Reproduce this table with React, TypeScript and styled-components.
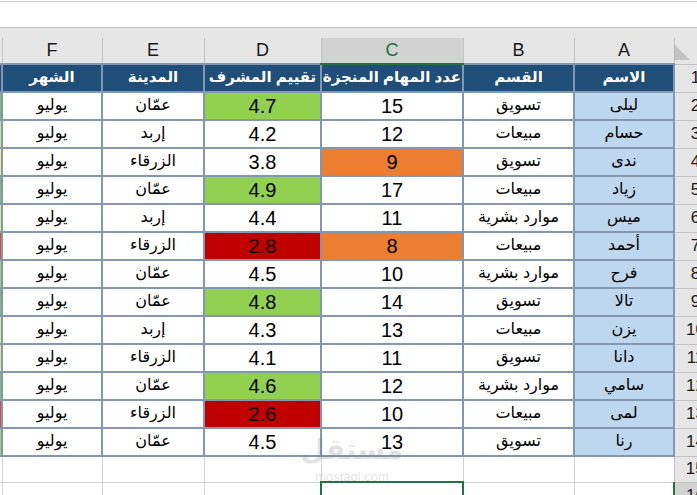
import React from "react";
import styled, { createGlobalStyle } from "styled-components";

const GlobalStyle = createGlobalStyle`
  html, body {
    margin: 0;
    padding: 0;
    background: #ffffff;
    overflow: hidden;
  }
`;

const FONT = `"Liberation Sans", "DejaVu Sans", Arial, sans-serif`;
const SLATE = "#8497b0";
const GRID = "#d4d4d4";
const HEAD_LINE = "#c3c3c3";
const EXCEL_GREEN = "#217346";

const Window = styled.div`
  position: relative;
  width: 697px;
  height: 495px;
  overflow: hidden;
  font-family: ${FONT};
  background: #ffffff;
`;

const FormulaBar = styled.div`
  height: 25px;
  margin-top: 1px;
  border-top: 1px solid #cfcfcf;
  border-bottom: 1px solid #c6c6c6;
  background: #ffffff;
`;

const Spacer = styled.div`
  height: 10px;
  background: #e6e6e6;
`;

const Viewport = styled.div`
  direction: rtl;
  overflow: hidden;
  background: #e6e6e6;
`;

const Sheet = styled.table`
  table-layout: fixed;
  border-collapse: collapse;
  width: 774px;
  margin-right: -19px;
  background: #ffffff;
`;

const ColHeadRow = styled.tr`
  height: 26px;
`;

const ColHead = styled.th<{ $active?: boolean }>`
  padding: 0;
  font-weight: normal;
  font-size: 18px;
  font-family: ${FONT};
  color: ${(p) => (p.$active ? EXCEL_GREEN : "#1a1a1a")};
  background: ${(p) => (p.$active ? "#d2d2d2" : "#e6e6e6")};
  border-left: 1px solid ${HEAD_LINE};
  border-right: 1px solid ${HEAD_LINE};
  border-bottom: ${(p) =>
    p.$active ? `2px solid ${EXCEL_GREEN}` : `1px solid ${HEAD_LINE}`};
  text-align: center;
  vertical-align: middle;
`;

const Corner = styled.th`
  padding: 0;
  background: #e6e6e6;
  border-left: 1px solid ${HEAD_LINE};
  border-bottom: 1px solid ${HEAD_LINE};
  position: relative;
`;

const CornerMark = styled.span`
  position: absolute;
  right: 26px;
  bottom: 4px;
  width: 0;
  height: 0;
  border-left: 16px solid #b4b4b4;
  border-top: 16px solid transparent;
  opacity: 0.7;
`;

const Row = styled.tr<{ $h: number }>`
  height: ${(p) => p.$h}px;
`;

const RowHead = styled.td<{ $active?: boolean }>`
  padding: 0;
  font-size: 17px;
  color: #1a1a1a;
  background: ${(p) => (p.$active ? "#d2d2d2" : "#e6e6e6")};
  border-bottom: 1px solid ${HEAD_LINE};
  border-left: ${(p) =>
    p.$active ? `2px solid ${EXCEL_GREEN}` : `1px solid ${HEAD_LINE}`};
  text-align: center;
  vertical-align: middle;
  font-family: ${FONT};
`;

const HeadCell = styled.td`
  padding: 0 0 2px;
  background: #1f4e78;
  color: #ffffff;
  font-weight: bold;
  font-size: 15px;
  border: 2px solid ${SLATE};
  text-align: center;
  vertical-align: middle;
  white-space: nowrap;
  overflow: hidden;
`;

const Cell = styled.td<{ $fill?: string; $num?: boolean }>`
  padding: 0 2px ${(p) => (p.$num ? "1px" : "3px")};
  background: ${(p) => p.$fill || "#ffffff"};
  color: #000000;
  font-size: ${(p) => (p.$num ? "20px" : "16px")};
  border: 2px solid ${SLATE};
  text-align: center;
  vertical-align: middle;
  white-space: nowrap;
  overflow: hidden;
  line-height: 1;
`;

const EmptyCell = styled.td<{ $selected?: boolean }>`
  padding: 0;
  background: #ffffff;
  border: ${(p) =>
    p.$selected ? `2px solid ${EXCEL_GREEN}` : `1px solid ${GRID}`};
`;

const Watermark = styled.div`
  position: absolute;
  left: 309px;
  top: 430px;
  width: 86px;
  display: flex;
  flex-direction: column;
  align-items: center;
  color: rgba(120, 120, 120, 0.22);
  pointer-events: none;
`;

const WatermarkLogo = styled.span`
  font-family: "DejaVu Sans", sans-serif;
  font-weight: bold;
  font-size: 28px;
  line-height: 40px;
`;

const WatermarkUrl = styled.span`
  font-family: ${FONT};
  font-size: 13px;
  line-height: 14px;
`;

const GREEN = "#92d050";
const ORANGE = "#ed7d31";
const RED = "#c00000";
const NAME_BLUE = "#bdd7ee";

const headers = ["الاسم", "القسم", "عدد المهام المنجزة", "تقييم المشرف", "المدينة", "الشهر"];
const letters = ["A", "B", "C", "D", "E", "F", "G"];
const widths = [42, 100, 111, 142, 117, 102, 100, 60];

type Rec = [string, string, number, number, string, string];

const data: Rec[] = [
  ["ليلى", "تسويق", 15, 4.7, "عمّان", "يوليو"],
  ["حسام", "مبيعات", 12, 4.2, "إربد", "يوليو"],
  ["ندى", "تسويق", 9, 3.8, "الزرقاء", "يوليو"],
  ["زياد", "مبيعات", 17, 4.9, "عمّان", "يوليو"],
  ["ميس", "موارد بشرية", 11, 4.4, "إربد", "يوليو"],
  ["أحمد", "مبيعات", 8, 2.8, "الزرقاء", "يوليو"],
  ["فرح", "موارد بشرية", 10, 4.5, "عمّان", "يوليو"],
  ["تالا", "تسويق", 14, 4.8, "عمّان", "يوليو"],
  ["يزن", "مبيعات", 13, 4.3, "إربد", "يوليو"],
  ["دانا", "تسويق", 11, 4.1, "الزرقاء", "يوليو"],
  ["سامي", "موارد بشرية", 12, 4.6, "عمّان", "يوليو"],
  ["لمى", "مبيعات", 10, 2.6, "الزرقاء", "يوليو"],
  ["رنا", "تسويق", 13, 4.5, "عمّان", "يوليو"],
];

// column G is cut off at the left edge, only its fill shows
const gFills = [
  "#7cc06a", "#c9e38a", "#f7e98a", "#7cc06a", "#d8e98e", "#e0483e", "#9fd07a",
  "#7cc06a", "#d8e98e", "#e6ea8c", "#7cc06a", "#e0483e", "#9fd07a",
];

const taskFill = (n: number) => (n < 10 ? ORANGE : undefined);
const rateFill = (r: number) => (r >= 4.6 ? GREEN : r < 3 ? RED : undefined);

export default function App() {
  return (
    <Window>
      <GlobalStyle />
      <FormulaBar />
      <Spacer />
      <Viewport>
        <Sheet>
          <colgroup>
            {widths.map((w, i) => (
              <col key={i} style={{ width: w }} />
            ))}
          </colgroup>
          <thead>
            <ColHeadRow>
              <Corner>
                <CornerMark />
              </Corner>
              {letters.map((l) => (
                <ColHead key={l} $active={l === "C"}>
                  {l}
                </ColHead>
              ))}
            </ColHeadRow>
          </thead>
          <tbody>
            <Row $h={28}>
              <RowHead>1</RowHead>
              {headers.map((h) => (
                <HeadCell key={h}>{h}</HeadCell>
              ))}
              <HeadCell />
            </Row>
            {data.map((r, i) => (
              <Row $h={28} key={i}>
                <RowHead>{i + 2}</RowHead>
                <Cell $fill={NAME_BLUE}>{r[0]}</Cell>
                <Cell>{r[1]}</Cell>
                <Cell $num $fill={taskFill(r[2])}>{r[2]}</Cell>
                <Cell $num $fill={rateFill(r[3])}>{r[3].toFixed(1)}</Cell>
                <Cell>{r[4]}</Cell>
                <Cell>{r[5]}</Cell>
                <Cell $fill={gFills[i]} />
              </Row>
            ))}
            <Row $h={26}>
              <RowHead>15</RowHead>
              {letters.map((l) => (
                <EmptyCell key={l} />
              ))}
            </Row>
            <Row $h={28}>
              <RowHead $active>16</RowHead>
              {letters.map((l) => (
                <EmptyCell key={l} $selected={l === "C"} />
              ))}
            </Row>
          </tbody>
        </Sheet>
      </Viewport>
      <Watermark>
        <WatermarkLogo>مستقل</WatermarkLogo>
        <WatermarkUrl>mostaql.com</WatermarkUrl>
      </Watermark>
    </Window>
  );
}
